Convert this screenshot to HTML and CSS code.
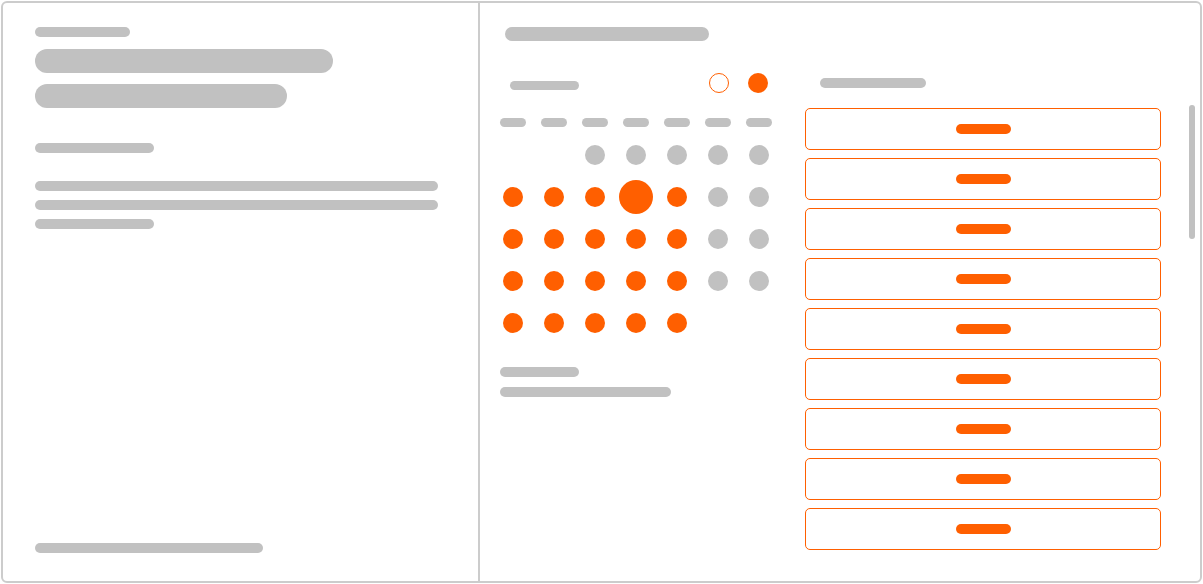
FILE: index.html
```html
<!DOCTYPE html>
<html lang="en">
<head>
    <meta charset="UTF-8">
    <meta name="viewport" content="width=device-width, initial-scale=1">
    <title>Booking</title>
    <link rel="stylesheet" href="styles.css">
</head>
<body>
    <div class="frame">
        <!-- Event details -->
        <div class="info">
            <div class="bar host"></div>
            <div class="bar title-a"></div>
            <div class="bar title-b"></div>
            <div class="bar duration"></div>
            <div class="desc">
                <div class="bar line"></div>
                <div class="bar line"></div>
                <div class="bar line short"></div>
            </div>
            <div class="bar footer"></div>
        </div>

        <!-- Date and time picker -->
        <div class="picker">
            <div class="bar picker-title"></div>
            <div class="picker-body">
                <div class="calendar">
                    <div class="cal-head">
                        <div class="bar month"></div>
                        <div class="nav">
                            <span class="nav-btn prev"></span>
                            <span class="nav-btn next"></span>
                        </div>
                    </div>
                    <div class="weekdays">
                        <span class="bar wd"></span><span class="bar wd"></span><span class="bar wd"></span>
                        <span class="bar wd"></span><span class="bar wd"></span><span class="bar wd"></span>
                        <span class="bar wd"></span>
                    </div>
                    <div class="days">
                        <span class="day empty"></span><span class="day empty"></span>
                        <span class="day off"></span><span class="day off"></span><span class="day off"></span><span class="day off"></span><span class="day off"></span>

                        <span class="day on"></span><span class="day on"></span><span class="day on"></span><span class="day on selected"></span><span class="day on"></span><span class="day off"></span><span class="day off"></span>

                        <span class="day on"></span><span class="day on"></span><span class="day on"></span><span class="day on"></span><span class="day on"></span><span class="day off"></span><span class="day off"></span>

                        <span class="day on"></span><span class="day on"></span><span class="day on"></span><span class="day on"></span><span class="day on"></span><span class="day off"></span><span class="day off"></span>

                        <span class="day on"></span><span class="day on"></span><span class="day on"></span><span class="day on"></span><span class="day on"></span>
                    </div>
                    <div class="tz">
                        <div class="bar tz-label"></div>
                        <div class="bar tz-value"></div>
                    </div>
                </div>

                <div class="slots">
                    <div class="bar slots-label"></div>
                    <div class="slot-list">
                        <div class="slot"><span class="slot-time"></span></div>
                        <div class="slot"><span class="slot-time"></span></div>
                        <div class="slot"><span class="slot-time"></span></div>
                        <div class="slot"><span class="slot-time"></span></div>
                        <div class="slot"><span class="slot-time"></span></div>
                        <div class="slot"><span class="slot-time"></span></div>
                        <div class="slot"><span class="slot-time"></span></div>
                        <div class="slot"><span class="slot-time"></span></div>
                        <div class="slot"><span class="slot-time"></span></div>
                    </div>
                </div>

                <div class="scrollbar"></div>
            </div>
        </div>
    </div>
</body>
</html>
```

FILE: styles.css
```css
* {
    box-sizing: border-box;
    margin: 0;
    padding: 0;
}

body {
    font-family: "Liberation Sans", Arial, sans-serif;
    background: white;
}

.frame {
    display: flex;
    width: 1201px;
    height: 582px;
    margin: 1px;
    border: 2px solid #cccccc;
    border-radius: 6px;
    background: white;
    overflow: hidden;
}

.bar {
    display: block;
    background: #c1c1c1;
    border-radius: 6px;
}

/* left column */
.info {
    display: flex;
    flex-direction: column;
    width: 477px;
    border-right: 2px solid #cccccc;
    padding: 24px 0 28px 32px;
}

.host { width: 95px; height: 10px; }

.title-a {
    width: 298px;
    height: 24px;
    border-radius: 12px;
    margin-top: 12px;
}

.title-b {
    width: 252px;
    height: 24px;
    border-radius: 12px;
    margin-top: 11px;
}

.duration {
    width: 119px;
    height: 10px;
    margin-top: 35px;
}

.desc {
    display: flex;
    flex-direction: column;
    gap: 9px;
    margin-top: 28px;
}

.line { width: 403px; height: 10px; }
.line.short { width: 119px; }

.footer {
    width: 228px;
    height: 10px;
    margin-top: auto;
}

/* right column */
.picker {
    flex: 1;
    padding: 24px 0 0 20px;
}

.picker-title {
    width: 204px;
    height: 14px;
    margin-left: 5px;
    border-radius: 7px;
}

.picker-body {
    display: flex;
    align-items: flex-start;
    margin-top: 32px;
}

.calendar {
    width: 273px;
}

.cal-head {
    display: flex;
    justify-content: space-between;
    align-items: flex-start;
    padding: 0 5px 0 10px;
}

.month {
    width: 69px;
    height: 9px;
    margin-top: 8px;
}

.nav {
    display: flex;
    gap: 19px;
}

.nav-btn {
    width: 20px;
    height: 20px;
    border-radius: 50%;
}

.nav-btn.prev { border: 1px solid #ff5f00; }
.nav-btn.next { background: #ff5f00; }

.weekdays,
.days {
    display: grid;
    grid-template-columns: repeat(7, 26px);
    column-gap: 15px;
}

.weekdays { margin-top: 25px; }

.wd { height: 9px; border-radius: 5px; }

.days {
    grid-auto-rows: 34px;
    row-gap: 8px;
    margin-top: 11px;
    justify-items: center;
    align-items: center;
}

.day {
    width: 20px;
    height: 20px;
    border-radius: 50%;
}

.day.off { background: #c1c1c1; }
.day.on { background: #ff5f00; }
.day.selected { width: 34px; height: 34px; }

.tz {
    display: flex;
    flex-direction: column;
    gap: 10px;
    margin-top: 27px;
}

.tz-label { width: 79px; height: 10px; }
.tz-value { width: 171px; height: 10px; }

.slots {
    width: 356px;
    margin-left: 32px;
}

.slots-label {
    width: 106px;
    height: 10px;
    margin: 5px 0 0 15px;
}

.slot-list {
    display: flex;
    flex-direction: column;
    gap: 8px;
    margin-top: 20px;
}

.slot {
    display: flex;
    align-items: center;
    justify-content: center;
    height: 42px;
    border: 1px solid #ff5f00;
    border-radius: 5px;
}

.slot-time {
    width: 55px;
    height: 10px;
    border-radius: 5px;
    background: #ff5f00;
}

.scrollbar {
    width: 6px;
    height: 134px;
    margin: 32px 0 0 28px;
    border-radius: 3px;
    background: #c1c1c1;
}
```
